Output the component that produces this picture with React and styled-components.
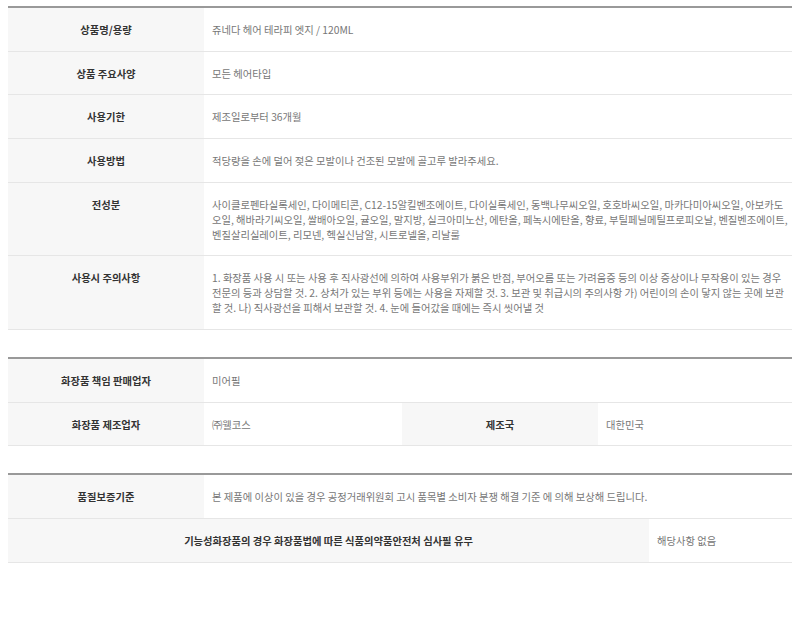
import React from "react";
import styled, { createGlobalStyle } from "styled-components";

const Global = createGlobalStyle`
  html, body { background: #fff; }
  body {
    margin: 6px 8px 8px;
    font-family: "Noto Sans CJK KR", "Noto Sans", sans-serif;
    font-size: 10.3px;
    line-height: 15px;
  }
`;

const Table = styled.section`
  border-top: 2px solid #999;
  & + & { margin-top: 27px; }
`;

const Row = styled.div`
  display: grid;
  grid-template-columns: ${(p) => p.$cols || "196px 1fr"};
  border-bottom: 1px solid #e6e6e6;
`;

const Cell = styled.div`
  padding: 14px 8px 13.67px;
`;

const Label = styled(Cell)`
  background: #f7f7f7;
  color: #333;
  font-weight: 700;
  text-align: center;
`;

const Value = styled(Cell)`
  color: #777;
  background: #fff;
  padding-right: 2px;
`;

const table1 = [
  ["상품명/용량", "쥬네다 헤어 테라피 엣지 / 120ML"],
  ["상품 주요사양", "모든 헤어타입"],
  ["사용기한", "제조일로부터 36개월"],
  ["사용방법", "적당량을 손에 덜어 젖은 모발이나 건조된 모발에 골고루 발라주세요."],
  [
    "전성분",
    "사이클로펜타실록세인, 다이메티콘, C12-15알킬벤조에이트, 다이실록세인, 동백나무씨오일, 호호바씨오일, 마카다미아씨오일, 아보카도오일, 해바라기씨오일, 쌀배아오일, 귤오일, 말지방, 실크아미노산, 에탄올, 페녹시에탄올, 향료, 부틸페닐메틸프로피오날, 벤질벤조에이트, 벤질살리실레이트, 리모넨, 헥실신남알, 시트로넬올, 리날룰",
  ],
  [
    "사용시 주의사항",
    "1. 화장품 사용 시 또는 사용 후 직사광선에 의하여 사용부위가 붉은 반점, 부어오름 또는 가려움증 등의 이상 증상이나 무작용이 있는 경우 전문의 등과 상담할 것. 2. 상처가 있는 부위 등에는 사용을 자제할 것. 3. 보관 및 취급시의 주의사항 가) 어린이의 손이 닿지 않는 곳에 보관할 것. 나) 직사광선을 피해서 보관할 것. 4. 눈에 들어갔을 때에는 즉시 씻어낼 것",
  ],
];

export default function App() {
  return (
    <>
      <Global />
      <Table>
        {table1.map(([k, v]) => (
          <Row key={k}>
            <Label>{k}</Label>
            <Value>{v}</Value>
          </Row>
        ))}
      </Table>
      <Table>
        <Row>
          <Label>화장품 책임 판매업자</Label>
          <Value>미어필</Value>
        </Row>
        <Row $cols="196px 198px 196px 1fr">
          <Label>화장품 제조업자</Label>
          <Value>㈜웰코스</Value>
          <Label>제조국</Label>
          <Value>대한민국</Value>
        </Row>
      </Table>
      <Table>
        <Row>
          <Label>품질보증기준</Label>
          <Value>본 제품에 이상이 있을 경우 공정거래위원회 고시 품목별 소비자 분쟁 해결 기준 에 의해 보상해 드립니다.</Value>
        </Row>
        <Row $cols="1fr 143px">
          <Label>기능성화장품의 경우 화장품법에 따른 식품의약품안전처 심사필 유무</Label>
          <Value>해당사항 없음</Value>
        </Row>
      </Table>
    </>
  );
}
